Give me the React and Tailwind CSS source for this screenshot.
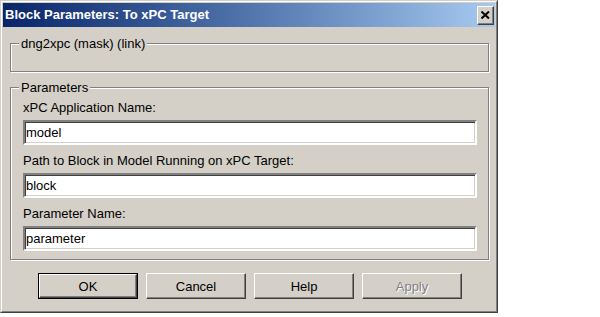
import React from "react";

const font = { fontFamily: '"Liberation Sans", Arial, sans-serif' };

function Field({ label, value, first }) {
  return (
    <div className="flex flex-col">
      <div className={`${first ? "mt-[12px]" : "mt-[8px]"} h-[15px] leading-[15px] text-[13px] text-black pl-[12px]`}>
        {label}
      </div>
      <div className="mt-[5px] ml-[12px] w-[454px] h-[25px] bg-white border-2 border-t-[#808080] border-l-[#808080] border-b-white border-r-white shadow-[inset_1px_1px_0_#404040,inset_-1px_-1px_0_#D4D0C8] flex items-center pl-[1px] text-[13px] text-black leading-[15px]">
        {value}
      </div>
    </div>
  );
}

function Btn({ children, isDefault, disabled }) {
  const inner = (
    <div className="w-full h-full flex items-center justify-center bg-[#D4D0C8] border border-t-white border-l-white border-b-[#404040] border-r-[#404040] shadow-[inset_-1px_-1px_0_#808080] text-[13px] leading-[15px]">
      <span
        className={disabled ? "text-[#808080] [text-shadow:1px_1px_0_#ffffff]" : "text-black"}
      >
        {children}
      </span>
    </div>
  );
  if (isDefault) {
    return <div className="w-[100px] h-[26px] border border-black">{inner}</div>;
  }
  return <div className="w-[100px] h-[26px]">{inner}</div>;
}

export default function App() {
  return (
    <div className="w-[600px] h-[317px] bg-white" style={font}>
      <div className="w-[498px] h-[313px] border border-t-[#D4D0C8] border-l-[#D4D0C8] border-b-[#404040] border-r-[#404040]">
        <div className="w-full h-full border border-t-white border-l-white border-b-[#808080] border-r-[#808080] bg-[#D4D0C8] p-[1px] flex flex-col">
          {/* Title bar */}
          <div className="h-[24px] flex items-center justify-between bg-gradient-to-r from-[#0A246A] to-[#A6CAF0] pl-[2px] pr-[1px]">
            <span className="text-white font-bold text-[13px] leading-[16px]">
              Block Parameters: To xPC Target
            </span>
            <div className="w-[17px] h-[19px] bg-[#D4D0C8] border border-t-white border-l-white border-b-[#404040] border-r-[#404040] shadow-[inset_-1px_-1px_0_#808080] flex items-center justify-center">
              <svg width="9" height="8" viewBox="0 0 9 8" className="mb-[1px]">
                <path d="M0.5 0.5 L8 7.5 M8 0.5 L0.5 7.5" stroke="#000" strokeWidth="2" />
              </svg>
            </div>
          </div>

          {/* Body */}
          <div className="flex flex-col pl-[7px]">
            {/* Group 1 */}
            <div className="relative mt-[16px] w-[479px] h-[29px] border border-[#808080] shadow-[inset_1px_1px_0_#ffffff,1px_1px_0_#ffffff]">
              <div className="absolute left-[8px] top-[-8px] px-[2px] bg-[#D4D0C8] text-[13px] leading-[15px] text-black">
                dng2xpc (mask) (link)
              </div>
            </div>

            {/* Group 2 */}
            <div className="relative mt-[15px] w-[479px] h-[173px] border border-[#808080] shadow-[inset_1px_1px_0_#ffffff,1px_1px_0_#ffffff] flex flex-col">
              <div className="absolute left-[8px] top-[-8px] px-[2px] bg-[#D4D0C8] text-[13px] leading-[15px] text-black">
                Parameters
              </div>
              <Field first label="xPC Application Name:" value="model" />
              <Field label="Path to Block in Model Running on xPC Target:" value="block" />
              <Field label="Parameter Name:" value="parameter" />
            </div>

            {/* Buttons */}
            <div className="mt-[13px] ml-[28px] flex gap-[8px]">
              <Btn isDefault>OK</Btn>
              <Btn>Cancel</Btn>
              <Btn>Help</Btn>
              <Btn disabled>Apply</Btn>
            </div>
          </div>
        </div>
      </div>
    </div>
  );
}
